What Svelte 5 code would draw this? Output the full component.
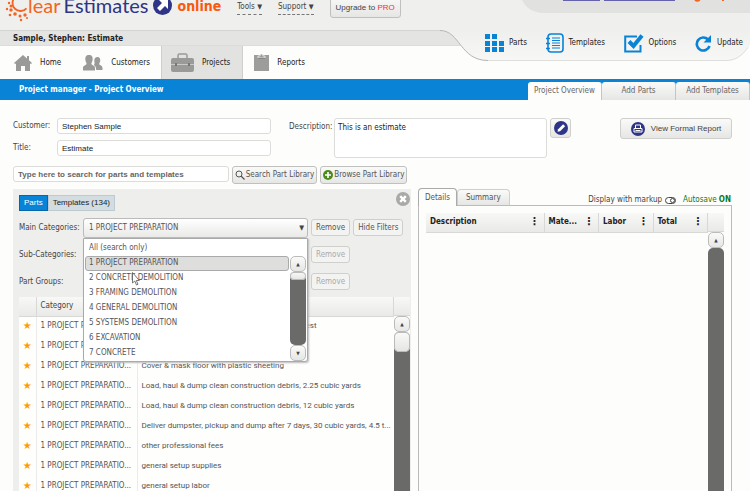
<script lang="ts">
  let description = $state('This is an estimate')
  let category = $state('1 PROJECT PREPARATION')

  const categories = [
    '1 PROJECT PREPARATION',
    '2 CONCRETE DEMOLITION',
    '3 FRAMING DEMOLITION',
    '4 GENERAL DEMOLITION',
    '5 SYSTEMS DEMOLITION',
    '6 EXCAVATION',
    '7 CONCRETE'
  ]
  const parts = [
    'Building permit, based on project cost, at cost est',
    'Portable toilet rental, per month',
    'Cover & mask floor with plastic sheeting',
    'Load, haul & dump clean construction debris, 2.25 cubic yards',
    'Load, haul & dump clean construction debris, 12 cubic yards',
    'Deliver dumpster, pickup and dump after 7 days, 30 cubic yards, 4.5 t...',
    'other professional fees',
    'general setup supplies',
    'general setup labor'
  ]
  const detailColumns = ['Description', 'Mate...', 'Labor', 'Total']
  // teeth of the logo gear: x, y, radius
  const teeth = [
    [4, 18, 1.2], [6, 21, 1.5], [2, 24, 1.2], [6, 25, 1.7], [5, 30, 1.3],
    [10, 29, 1.8], [15, 31, 1.5], [16, 35, 1.2], [20, 30, 1.7], [22, 33, 1]
  ]
</script>

{#snippet scrollbar(thumb: number, down: boolean)}
  <div class="scrollbar">
    <button class="scroll-btn" aria-label="Scroll up">▲</button>
    <div class="track">
      <div class="thumb" style:height={thumb + 'px'}></div>
    </div>
    {#if down}
      <button class="scroll-btn" aria-label="Scroll down">▼</button>
    {/if}
  </div>
{/snippet}

<div class="page">
  <header>
    <div class="main-head">
      <div class="top">
        <a class="logo" href="#home">
          <svg class="gear" width="34" height="37" viewBox="0 0 34 37">
            {#each teeth as [x, y, r]}
              <circle cx={x} cy={y} {r} fill="#f26522" />
            {/each}
            <path d="M21.500 23.300A8 8 0 1 1 21.500 12.700" fill="none" stroke="#f26522" stroke-width="1.800" />
          </svg>
          <span class="clear">lear</span>
          <span class="estimates">Estimates</span>
          <svg class="arrow" width="19" height="19" viewBox="0 0 19 19">
            <circle cx="9.500" cy="9.500" r="9.500" fill="#2e3486" />
            <path d="M6 4h9v9l-3-3-5 5-3-3 5-5z" fill="#fff" />
          </svg>
          <span class="online">online</span>
        </a>
        <button class="menu">Tools <i>▼</i></button>
        <button class="menu">Support <i>▼</i></button>
        <button class="upgrade">Upgrade to <em>PRO</em></button>
      </div>
      <div class="titlebar">Sample, Stephen: Estimate</div>
      <nav>
        <a href="#home">
          <svg width="18" height="16" viewBox="0 0 18 16" fill="#9a9a99">
            <path d="M9 0L0 8l1 1 1-.5V16h5v-5h4v5h5V8.500l1 .5 1-1-3-2.700V1h-2v2.500z" />
          </svg>
          Home
        </a>
        <a href="#customers">
          <svg width="20" height="16" viewBox="0 0 20 16" fill="#9a9a99">
            <path d="M6 0c3 0 4 2 3.600 5-.3 2-1.200 2.600-1.200 4 1 1.500 3.600 1.500 3.600 4v2.500H0V13c0-2.500 2.500-2.500 3.600-4 0-1.400-1-2-1.200-4C2 2 3 0 6 0z" />
            <path d="M14.500 2c2.300 0 3 1.700 2.700 4-.2 1.500-1 2-1 3.200 1 1.300 3.300 1.300 3.300 3.800v2h-6.300c0-3-1-4-2.400-5 1.200-1 .6-2.500.5-4.500C11.300 3.500 12.500 2 14.500 2z" />
          </svg>
          Customers
        </a>
        <a class="active" href="#projects">
          <svg width="23" height="19" viewBox="0 0 23 19">
            <path d="M7 5V2.500Q7 1 8.500 1h6Q16 1 16 2.500V5" fill="none" stroke="#9a9a99" stroke-width="1.500" />
            <rect y="5" width="23" height="14" rx="2" fill="#9a9a99" />
            <path d="M0 11.500h4M6 11.500h11M19 11.500h4" stroke="#c9c9c8" />
            <path d="M4 10h2v3h-2zM17 10h2v3h-2z" fill="#777" />
          </svg>
          Projects
        </a>
        <a href="#reports">
          <svg class="clipboard" width="15" height="19" viewBox="0 0 15 19">
            <rect y="2" width="15" height="16" fill="#9d9d9c" />
            <path d="M4 5V3h2q0-2 1.500-2T9 3h2v2z" fill="#9d9d9c" stroke="#eee" stroke-width=".8" />
            <path d="M4 5.500h7" stroke="#777" stroke-width=".8" />
          </svg>
          Reports
        </a>
      </nav>
    </div>
    <div class="tool-head">
      <svg class="swoosh" viewBox="0 0 310 78" width="310" height="78">
        <defs>
          <linearGradient id="head-fill" x1="0" y1="0" x2="0" y2="1">
            <stop offset="0" stop-color="#efefee" />
            <stop offset="0.500" stop-color="#efefee" />
            <stop offset="1" stop-color="#f7f7f6" />
          </linearGradient>
        </defs>
        <path d="M0 31h60v14H0z" fill="#e4e4e3" />
        <path d="M0 45.500h60" stroke="#dcdcdb" />
        <path d="M0 0v31c20 0 20 30 48 30h238c10 0 16-5 22-13l2-3V0z" fill="url(#head-fill)" />
        <path d="M0 30.500c20 0 20 30 48 30" fill="none" stroke="#b4b4b3" />
        <path d="M48 60.500h238c10 0 16-5 22-13" fill="none" stroke="#dededd" />
        <path d="M82 0c4 8 11 13 22 13h206V0z" fill="#e1e1e0" />
        <path d="M123 0h37M164 0h71" stroke="#6461ad" stroke-width="2" />
        <path d="M255 0q3 2 5-1M282 0h2" stroke="#f26522" stroke-width="2" fill="none" />
      </svg>
      <div class="tools">
        <a href="#parts">
          <svg width="19" height="18" viewBox="0 0 19 18" fill="#0983d6">
            <path d="M0 0h5v5H0zM7 0h5v5H7zM0 7h5v5H0zM7 7h5v5H7zM14 7h5v5h-5zM0 13h5v5H0zM7 13h5v5H7zM14 13h5v5h-5z" />
          </svg>
          Parts
        </a>
        <a href="#templates">
          <svg width="18" height="20" viewBox="0 0 18 20" fill="none" stroke="#0983d6">
            <rect x="2" y="1" width="15" height="18" rx="3" stroke-width="1.600" />
            <path d="M6 5h8M6 7.500h8M6 10h8M6 12.500h8M6 15h8" />
            <path d="M0 5.500h4M0 10.500h4M0 15.500h4" stroke-width="1.400" />
          </svg>
          Templates
        </a>
        <a href="#options">
          <svg width="20" height="19" viewBox="0 0 20 19" fill="none" stroke="#0983d6">
            <path d="M13 2.500H1.200V17.500H16.500V11" stroke-width="2" />
            <path d="M5 7.500l4.500 4.500L18 1.500" stroke-width="4" />
          </svg>
          Options
        </a>
        <a href="#update">
          <svg width="17" height="17" viewBox="0 0 17 17">
            <path d="M13 4.500A6.500 6.500 0 1 0 14.500 11" fill="none" stroke="#0983d6" stroke-width="2.600" />
            <path d="M16 0v7.500H8.500z" fill="#0983d6" />
          </svg>
          Update
        </a>
      </div>
    </div>
  </header>

  <div class="bluebar">
    <h1>Project manager - Project Overview</h1>
    <div class="page-tabs">
      <button class="active">Project Overview</button>
      <button>Add Parts</button>
      <button>Add Templates</button>
    </div>
  </div>

  <main>
    <form class="project">
      <div class="fields">
        <label for="customer">Customer:</label>
        <input id="customer" value="Stephen Sample" />
        <label for="title">Title:</label>
        <input id="title" value="Estimate" />
      </div>
      <label class="description-label" for="description">Description:</label>
      <textarea id="description" bind:value={description}></textarea>
      <button type="button" class="edit" aria-label="Edit">
        <svg width="14" height="14" viewBox="0 0 14 14">
          <circle cx="7" cy="7" r="7" fill="#2e3486" />
          <path d="M3.500 10.800l.6-2.600 5-5 2 2-5 5z" fill="#fff" />
        </svg>
      </button>
      <button type="button" class="report">
        <svg width="14" height="14" viewBox="0 0 14 14">
          <circle cx="7" cy="7" r="7" fill="#2e3486" />
          <path d="M4.500 6.500V3h5v3.500M3 6.500h8V10H3zM4.500 8.500h5" fill="none" stroke="#fff" />
        </svg>
        View Formal Report
      </button>
    </form>

    <div class="search">
      <input aria-label="Search" placeholder="Type here to search for parts and templates" />
      <button>
        <svg width="10" height="10" viewBox="0 0 10 10" fill="none" stroke="#555">
          <circle cx="4" cy="4" r="3" />
          <path d="M6 6l3.500 3.500" stroke-width="1.300" />
        </svg>
        Search Part Library
      </button>
      <button>
        <svg width="10" height="10" viewBox="0 0 10 10">
          <circle cx="5" cy="5" r="5" fill="#4d8a1c" />
          <path d="M5 2v6M2 5h6" stroke="#fff" stroke-width="1.600" />
        </svg>
        Browse Part Library
      </button>
    </div>

    <div class="workspace">
      <section class="library">
        <div class="library-head">
          <button class="active">Parts</button>
          <button>Templates (134)</button>
          <button class="close" aria-label="Close">
            <svg width="14" height="14" viewBox="0 0 14 14">
              <circle cx="7" cy="7" r="7" fill="#a9a9a8" />
              <path d="M4.200 4.200l5.600 5.600M9.800 4.200L4.200 9.800" stroke="#fff" stroke-width="2.400" />
            </svg>
          </button>
        </div>
        <div class="filter">
          <label for="main-category">Main Categories:</label>
          <div class="combo">
            <select id="main-category" bind:value={category}>
              {#each categories as name}
                <option>{name}</option>
              {/each}
            </select>
            <div class="dropdown">
              <button class="option">All (search only)</button>
              <div class="options">
                <div class="option-list">
                  {#each categories as name}
                    <button class="option" class:selected={name === category} onclick={() => (category = name)}>
                      {name}
                    </button>
                  {/each}
                </div>
                {@render scrollbar(8, true)}
              </div>
              <svg class="cursor" width="8" height="14" viewBox="0 0 8 14">
                <path d="M.5.5v10.500l2.300-2 1.700 4 1.500-.7-1.700-3.800h3z" fill="#fff" stroke="#555" stroke-width=".8" />
              </svg>
            </div>
          </div>
          <button>Remove</button>
          <button>Hide Filters</button>
        </div>
        <div class="filter">
          <label for="sub-category">Sub-Categories:</label>
          <div class="combo"><select id="sub-category" disabled></select></div>
          <button disabled>Remove</button>
        </div>
        <div class="filter">
          <label for="part-group">Part Groups:</label>
          <div class="combo"><select id="part-group" disabled></select></div>
          <button disabled>Remove</button>
        </div>
        <div class="grid">
          <table class="parts">
            <thead>
              <tr>
                <th class="star"></th>
                <th class="category">Category</th>
                <th></th>
              </tr>
            </thead>
            <tbody>
              {#each parts as part}
                <tr>
                  <td class="star">★</td>
                  <td>1 PROJECT PREPARATIO...</td>
                  <td class="name">{part}</td>
                </tr>
              {/each}
            </tbody>
          </table>
          <div class="side">
            <div class="corner"></div>
            {@render scrollbar(20, false)}
          </div>
        </div>
      </section>

      <section class="details">
        <div class="details-head">
          <button class="active">Details</button>
          <button>Summary</button>
          <label class="markup">
            Display with markup
            <input type="checkbox" />
          </label>
          <span class="autosave">Autosave <b>ON</b></span>
        </div>
        <div class="details-body">
          <table>
            <thead>
              <tr>
                {#each detailColumns as column}
                  <th><span>{column}<i>⋮</i></span></th>
                {/each}
              </tr>
            </thead>
          </table>
          <div class="side">
            <div class="corner"></div>
            {@render scrollbar(0, false)}
          </div>
        </div>
      </section>
    </div>
  </main>
</div>

<style>
  :global(body) {
    margin: 0;
    background: #fdfdfc;
  }
  .page {
    display: flex;
    flex-direction: column;
    height: 100vh;
    overflow: hidden;
    font: 8px/12px 'DejaVu Sans Condensed', 'DejaVu Sans', sans-serif;
    color: #444;
  }
  button,
  input,
  textarea,
  select {
    box-sizing: border-box;
    margin: 0;
    font: inherit;
    color: inherit;
  }
  svg {
    display: block;
    flex: none;
  }
  a {
    color: inherit;
    text-decoration: none;
  }
  i,
  em {
    font-style: normal;
  }
  button {
    padding: 0;
    border: 1px solid #cfcfce;
    border-radius: 3px;
    background: linear-gradient(#fafaf9, #e6e6e5);
    white-space: nowrap;
  }

  /* header */
  header {
    display: flex;
    flex: none;
    height: 79px;
  }
  .main-head {
    flex: 1;
  }
  .top {
    display: flex;
    align-items: flex-end;
    box-sizing: border-box;
    height: 31px;
    padding-bottom: 15px;
    padding-left: 5px;
    background: #efefee;
    border-bottom: 1px solid #d4d4d3;
  }
  .logo {
    display: flex;
    align-items: flex-end;
    height: 20px;
    font: 20px/20px Lato, sans-serif;
  }
  .gear {
    margin-bottom: -7px;
  }
  .clear {
    margin-left: -11px;
    color: #f26522;
  }
  .estimates {
    margin-left: 3px;
    color: #2e3486;
  }
  .arrow {
    margin: 0 5px;
  }
  .online {
    font: bold 14px/18px 'DejaVu Sans Condensed', 'DejaVu Sans', sans-serif;
    color: #f9580f;
  }
  .menu {
    margin-left: 16px;
    border: 0;
    border-bottom: 1px dashed #777;
    border-radius: 0;
    background: none;
    line-height: 14px;
  }
  .menu i {
    font-size: 7px;
  }
  .upgrade {
    height: 24px;
    margin-bottom: -3px;
    margin-left: 16px;
    padding: 4px 5px 0;
    border-color: #c0c0bf;
    font-family: 'Liberation Sans', sans-serif;
  }
  .upgrade em {
    color: #ff2d1a;
  }
  .titlebar {
    height: 14px;
    padding-left: 13px;
    background: #e4e4e3;
    font-weight: bold;
    line-height: 15px;
    color: #222;
  }
  nav {
    display: flex;
    height: 33px;
    border-top: 1px solid #dcdcdb;
    color: #222;
  }
  nav a {
    display: flex;
    align-items: center;
    gap: 8px;
    padding: 0 11px;
  }
  nav a:first-child {
    padding-left: 14px;
  }
  nav a.active {
    padding: 0 12px 0 9px;
    background: #e2e2e1;
    border: 1px solid #cfcfce;
    border-width: 0 1px;
  }
  .tool-head {
    position: relative;
    width: 310px;
  }
  .swoosh {
    position: absolute;
    top: 0;
    left: 0;
  }
  .tools {
    position: relative;
    display: flex;
    justify-content: space-between;
    padding: 33px 7px 0 45px;
    color: #222;
  }
  .tools a {
    display: flex;
    align-items: center;
    gap: 5px;
    height: 20px;
  }

  .bluebar {
    display: flex;
    flex: none;
    align-items: flex-end;
    justify-content: space-between;
    height: 21px;
    padding-left: 19px;
    background: #0983d6;
  }
  h1 {
    margin: 0;
    font-size: 8px;
    line-height: 20px;
    color: #fff;
  }
  .page-tabs {
    display: flex;
  }
  .page-tabs button {
    width: 74px;
    height: 18px;
    border: 0;
    border-right: 1px solid #c4c4c3;
    border-radius: 3px 3px 0 0;
    color: #666;
  }
  .page-tabs .active {
    background: #fdfdfc;
  }

  /* project form */
  main {
    display: flex;
    flex: 1;
    flex-direction: column;
    min-height: 0;
    padding: 18px 18px 0 13px;
  }
  .project {
    display: flex;
    align-items: flex-start;
    height: 48px;
  }
  .fields {
    display: grid;
    grid-template-columns: 44px 1fr;
    grid-auto-rows: 16px;
    gap: 6px 0;
    align-items: center;
    flex: 258;
  }
  .project input,
  .project textarea,
  .search input {
    min-width: 0;
    width: 100%;
    height: 16px;
    padding: 0 4px;
    border: 1px solid #dcdcdb;
    border-radius: 3px;
    background: #fff;
    font-family: 'Liberation Sans', sans-serif;
    color: #222;
  }
  .description-label {
    width: 45px;
    margin: 3px 0 0 18px;
  }
  .project textarea {
    flex: 205;
    height: 40px;
    padding: 3px;
    resize: none;
    font-family: inherit;
  }
  .edit {
    display: grid;
    place-items: center;
    width: 21px;
    height: 20px;
    margin: 0 49px 0 3px;
  }
  .report {
    display: flex;
    align-items: center;
    justify-content: center;
    gap: 6px;
    width: 112px;
    height: 21px;
    font-family: 'Liberation Sans', sans-serif;
  }
  .search {
    display: flex;
    gap: 3px;
    margin-bottom: 5px;
  }
  .search input {
    flex: 0 1 30%;
    font-weight: bold;
  }
  .search input::placeholder {
    color: #666;
    opacity: 1;
  }
  .search button {
    display: flex;
    align-items: center;
    gap: 1px;
    height: 18px;
    padding: 0 2px;
    border-color: #c0c0bf;
    color: #555;
  }

  .workspace {
    display: grid;
    grid-template-columns: 398fr 314fr;
    gap: 7px;
    flex: 1;
    min-height: 0;
  }

  /* part library */
  .library {
    display: flex;
    flex-direction: column;
    min-width: 0;
    min-height: 0;
    padding: 0 1px 0 6px;
    background: #eeeeed;
  }
  .library-head {
    display: flex;
    align-items: center;
    flex: none;
    height: 16px;
    padding: 6px 0 3px;
    font-family: 'Liberation Sans', sans-serif;
  }
  .library-head button {
    height: 16px;
    padding: 0 4px;
    border: 1px solid #bccbd2;
    border-radius: 0;
    background: #d3dde1;
    color: #222;
  }
  .library-head .active {
    border-color: #0765a8;
    background: #0983d6;
    color: #fff;
  }
  .library-head .close {
    height: 14px;
    margin: 0 0 8px auto;
    padding: 0;
    border: 0;
    background: none;
  }
  .filter {
    display: flex;
    align-items: center;
    flex: none;
    gap: 3px;
    height: 27px;
  }
  .filter label {
    width: 61px;
    white-space: nowrap;
  }
  .combo {
    position: relative;
    flex: 0 0 225px;
  }
  .combo select {
    display: block;
    width: 100%;
    height: 20px;
    padding: 0 5px;
    appearance: none;
    border: 1px solid #bbb;
    border-radius: 3px;
    background: linear-gradient(#fff, #e9e9e8);
    color: #555;
  }
  .combo::after {
    content: '▼';
    position: absolute;
    top: 4px;
    right: 4px;
    font-size: 7px;
    color: #444;
  }
  .dropdown {
    position: absolute;
    z-index: 1;
    top: 20px;
    left: 0;
    right: 0;
    padding: 2px 1px 0;
    border: 1px solid #aaa;
    border-radius: 0 0 3px 3px;
    background: #fff;
    box-shadow: 1px 1px 2px #bbb;
  }
  .options {
    display: flex;
    gap: 1px;
    height: 105px;
  }
  .option-list {
    flex: 1;
  }
  .option {
    display: block;
    width: 100%;
    height: 15px;
    padding: 0 3px;
    border-color: transparent;
    background: none;
    text-align: left;
    color: #555;
  }
  .option.selected {
    border-color: #aaa;
    background: #dededd;
  }
  .cursor {
    position: absolute;
    top: 33px;
    left: 48px;
  }
  .filter > button {
    height: 17px;
    padding: 0 4px;
    background: #f3f3f2;
    color: #555;
  }
  .filter > button:disabled {
    color: #aaa;
  }

  .grid,
  .details-body {
    display: flex;
    flex: 1;
    min-height: 0;
  }
  .grid {
    margin-top: 2px;
    overflow: hidden;
    background: #fefefd;
  }
  table {
    flex: 1;
    width: 100%;
    min-width: 0;
    height: max-content;
    border-collapse: collapse;
    table-layout: fixed;
  }
  th {
    box-sizing: border-box;
    height: 19px;
    padding: 0 4px;
    border-right: 1px solid #d8d8d7;
    border-bottom: 1px solid #d8d8d7;
    background: linear-gradient(#f8f8f7, #e9e9e8);
    text-align: left;
    font-weight: normal;
  }
  .parts td {
    box-sizing: border-box;
    height: 20px;
    padding: 0 0 0 4px;
    border-right: 1px solid #ebebea;
    white-space: nowrap;
    color: #555;
  }
  .parts .name {
    border: 0;
    font-family: Roboto, sans-serif;
  }
  .parts .star {
    width: 17px;
    padding: 0;
    text-align: center;
    font-family: 'DejaVu Sans', sans-serif;
    font-size: 10px;
    color: #ff9d00;
  }
  .category {
    width: 101px;
  }

  .side {
    display: flex;
    flex: none;
    flex-direction: column;
    width: 16px;
  }
  .corner {
    height: 18px;
    border-bottom: 1px solid #d8d8d7;
    background: linear-gradient(#f8f8f7, #e9e9e8);
  }
  .scrollbar {
    display: flex;
    flex-direction: column;
    width: 16px;
  }
  .side .scrollbar {
    flex: 1;
  }
  .scroll-btn {
    height: 16px;
    border-color: #bbb;
    border-radius: 5px;
    font-size: 5px;
    line-height: 12px;
  }
  .track {
    flex: 1;
    border-radius: 5px;
    background: #6a6a69;
  }
  .thumb {
    border-radius: 5px;
    background: linear-gradient(#fafaf9, #e4e4e3);
    box-shadow: inset 0 0 0 1px #bbb;
  }
  .side .track {
    border-radius: 5px 5px 0 0;
  }

  /* details */
  .details {
    display: flex;
    flex-direction: column;
    min-width: 0;
    min-height: 0;
  }
  .details-head {
    display: flex;
    align-items: flex-end;
    flex: none;
    height: 16px;
  }
  .details-head button {
    height: 16px;
    padding: 0 8px;
    border-bottom: 0;
    border-radius: 4px 4px 0 0;
    color: #555;
  }
  .details-head .active {
    z-index: 1;
    height: 18px;
    margin-bottom: -1px;
    padding: 0 6px;
    border-color: #aaa;
    background: #fdfdfc;
  }
  .markup {
    display: flex;
    align-items: center;
    gap: 3px;
    margin-left: auto;
    line-height: 10px;
  }
  .markup input {
    display: flex;
    justify-content: flex-end;
    width: 11px;
    height: 7px;
    appearance: none;
    border: 1px solid #444;
    border-radius: 4px;
  }
  .markup input::before {
    content: '';
    width: 3px;
    height: 3px;
    border: 1px solid #444;
    border-radius: 50%;
  }
  .autosave {
    margin: 0 1px 0 7px;
    line-height: 10px;
    color: #0a7a1a;
  }
  .details-body {
    padding: 7px 7px 0;
    border: 1px solid #bbb;
    border-width: 1px 1px 0;
  }
  .details-body th {
    font-weight: bold;
    color: #222;
  }
  .details-body th:first-child {
    width: 118px;
  }
  .details-body th span {
    display: flex;
    align-items: center;
    justify-content: space-between;
  }
  .details-body th i {
    font-size: 11px;
  }
</style>
